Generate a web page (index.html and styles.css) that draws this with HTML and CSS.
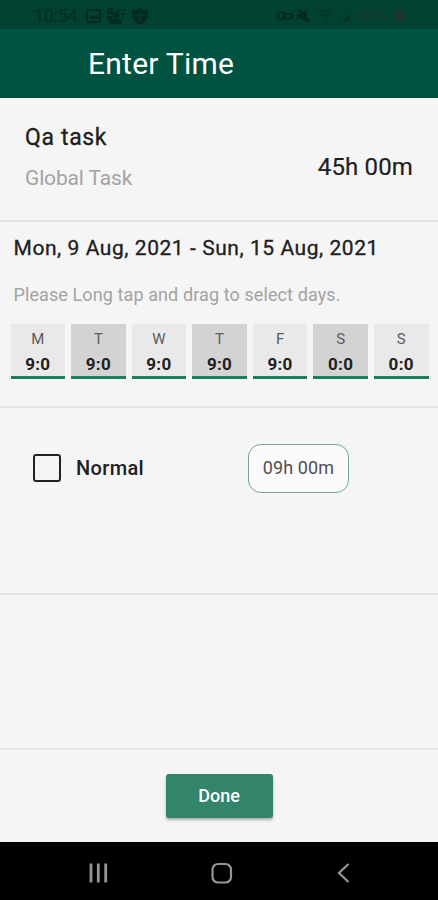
FILE: index.html
```html
<!DOCTYPE html>
<html lang="en">
<head>
<meta charset="utf-8">
<title>Enter Time</title>
<link rel="stylesheet" href="styles.css">
</head>
<body>
<div class="screen">
  <div class="status">
    <span class="clock">10:54</span>
    <svg class="status-left" width="64" height="20" viewBox="0 0 64 20" fill="none" stroke="currentColor" stroke-width="2">
      <rect x="2" y="4" width="13" height="12" rx="1"/>
      <path d="M4 13l3-4 2 2 2-3 3 5z" fill="currentColor" stroke="none"/>
      <path d="M23 3h4v4h-4zM33 4h3M38 4h3M36 8h5M36 12h2M23 11h3v3h-3z"/>
      <circle cx="31" cy="9" r="3.500" fill="currentColor" stroke="none"/>
      <path d="M25 18q0-5 6-5t6 5z" fill="currentColor" stroke="none"/>
      <path d="M55 2q4 2.500 8 2.500v5q0 6-8 9-8-3-8-9v-5q4 0 8-2.500z" fill="currentColor" stroke="none"/>
      <path class="shield-cross" d="M55 5v11M49 9h12" stroke-width="1.200"/>
    </svg>
    <svg class="status-right" width="76" height="20" viewBox="0 0 76 20" fill="none" stroke="currentColor" stroke-width="2">
      <circle cx="5" cy="10" r="3.500"/>
      <path d="M8 8h6a2.200 2.200 0 0 1 0 4.500H8"/>
      <path d="M21 8h4l6-4v13l-6-4h-4z" fill="currentColor" stroke="none"/>
      <path d="M22 3l12 13"/>
      <path class="faint" d="M43 7q7-5 14 0M46 10q4-3 8 0M49 13h3"/>
      <path class="faint" d="M66 16h8V7z" fill="currentColor" stroke="none"/>
    </svg>
    <span class="percent">85%</span>
    <span class="battery"></span>
  </div>
  <header class="bar"><h1>Enter Time</h1></header>
  <section class="task">
    <div>
      <div class="task-name">Qa task</div>
      <div class="task-kind">Global Task</div>
    </div>
    <div class="total">45h 00m</div>
  </section>
  <section class="week">
    <div class="range">Mon, 9 Aug, 2021 - Sun, 15 Aug, 2021</div>
    <div class="hint">Please Long tap and drag to select days.</div>
    <div class="days">
      <div class="day"><span>M</span><b>9:0</b></div>
      <div class="day on"><span>T</span><b>9:0</b></div>
      <div class="day"><span>W</span><b>9:0</b></div>
      <div class="day on"><span>T</span><b>9:0</b></div>
      <div class="day"><span>F</span><b>9:0</b></div>
      <div class="day on"><span>S</span><b>0:0</b></div>
      <div class="day"><span>S</span><b>0:0</b></div>
    </div>
  </section>
  <section class="entry">
    <span class="check"></span>
    <span class="entry-name">Normal</span>
    <span class="entry-time">09h 00m</span>
  </section>
  <section class="blank"></section>
  <footer class="actions"><button class="done">Done</button></footer>
  <nav class="nav">
    <svg width="20" height="20" viewBox="0 0 20 20" fill="none" stroke="currentColor" stroke-width="2.800"><path d="M3 0.500v19M10.300 0.500v19M17.700 0.500v19"/></svg>
    <svg width="22" height="22" viewBox="0 0 22 22" fill="none" stroke="currentColor" stroke-width="2.200"><rect x="1.500" y="2" width="18.500" height="18.500" rx="5.500"/></svg>
    <svg width="14" height="20" viewBox="0 0 14 20" fill="none" stroke="currentColor" stroke-width="2.200"><path d="M12.500 1L3 10l9.500 9"/></svg>
  </nav>
</div>
</body>
</html>
```
FILE: styles.css
```css
* { box-sizing: border-box; }
body { margin: 0; font-family: Roboto, "Liberation Sans", sans-serif; color: #202020; background: #f5f5f5; }
.screen { width: 438px; height: 900px; display: flex; flex-direction: column; overflow: hidden; white-space: nowrap; }

.status { height: 29px; flex: none; display: flex; align-items: center; padding: 2px 0 0 34px; background: #004131; color: #032a20; }
.clock { width: 50px; font-size: 18px; line-height: 27px; letter-spacing: -.3px; color: #042c22; }
.status-left { margin-left: 1px; }
.shield-cross { stroke: #004131; }
.status-right { margin-left: 127px; }
.faint { opacity: .5; }
.percent { margin-left: 6px; width: 37px; font-size: 15px; color: #213a2d; }
.battery { width: 9px; height: 12px; border-radius: 2px; background: #20352a; }

.bar { height: 69px; flex: none; padding-left: 88px; background: #005340; border-bottom: 2px solid #004b39; }
.bar h1 { margin: 0; font-size: 30px; font-weight: 400; line-height: 70px; letter-spacing: .25px; color: #fff; }

.task { height: 124px; flex: none; display: flex; justify-content: space-between; padding: 0 25px; border-bottom: 2px solid #e2e2e2; }
.task-name { margin-top: 25px; font-size: 23px; line-height: 30px; letter-spacing: .65px; -webkit-text-stroke: .3px; }
.task-kind { margin-top: 11px; font-size: 21px; line-height: 28px; letter-spacing: -.15px; color: #a3a3a3; }
.total { margin-top: 54px; font-size: 24px; line-height: 30px; letter-spacing: .15px; -webkit-text-stroke: .2px; }

.week { height: 186px; flex: none; padding: 13px 9.500px 0 10.500px; border-bottom: 2px solid #e6e6e6; }
.range { padding-left: 3px; font-size: 21px; line-height: 26px; letter-spacing: .56px; -webkit-text-stroke: .3px; }
.hint { padding-left: 3px; margin-top: 22px; font-size: 18px; line-height: 24px; letter-spacing: .1px; color: #a3a3a3; }
.days { display: grid; grid-template-columns: repeat(7, 1fr); gap: 6px; margin-top: 17px; }
.day { height: 55px; display: flex; flex-direction: column; align-items: center; background: #e9e9e9; border-bottom: 3px solid #16825f; }
.day.on { background: #d3d3d3; }
.day span { margin-top: 6px; font-size: 15px; line-height: 18px; color: #5c5c5c; }
.day b { font-size: 17px; line-height: 20px; margin-top: 6px; font-weight: 700; letter-spacing: .3px; }

.entry { height: 187px; flex: none; display: flex; align-items: flex-start; padding: 36px 0 0 33px; border-bottom: 2px solid #e6e6e6; }
.check { width: 28px; height: 28px; margin-top: 10px; border: 2.500px solid #222; border-radius: 3px; }
.entry-name { width: 172px; margin-left: 15px; padding-top: 10px; font-size: 20px; font-weight: 500; line-height: 28px; letter-spacing: .35px; }
.entry-time { width: 101px; height: 49px; border: 1.500px solid #6fa996; border-radius: 13px; background: #fafafa; color: #505050; font-size: 18px; line-height: 46px; letter-spacing: .1px; text-align: center; }

.blank { height: 155px; flex: none; border-bottom: 2px solid #e8e8e8; }
.actions { height: 92px; flex: none; padding-top: 24px; text-align: center; }
.done { width: 107px; height: 44px; padding: 0; border: 0; border-radius: 3px; background: #32846a; box-shadow: 0 2px 3px rgba(0, 0, 0, .3); color: #fff; font: 500 18px/44px Roboto, sans-serif; }
.nav { flex: 1; display: flex; align-items: center; justify-content: space-between; padding: 3px 88px 0; background: #000; color: #969696; }
```
